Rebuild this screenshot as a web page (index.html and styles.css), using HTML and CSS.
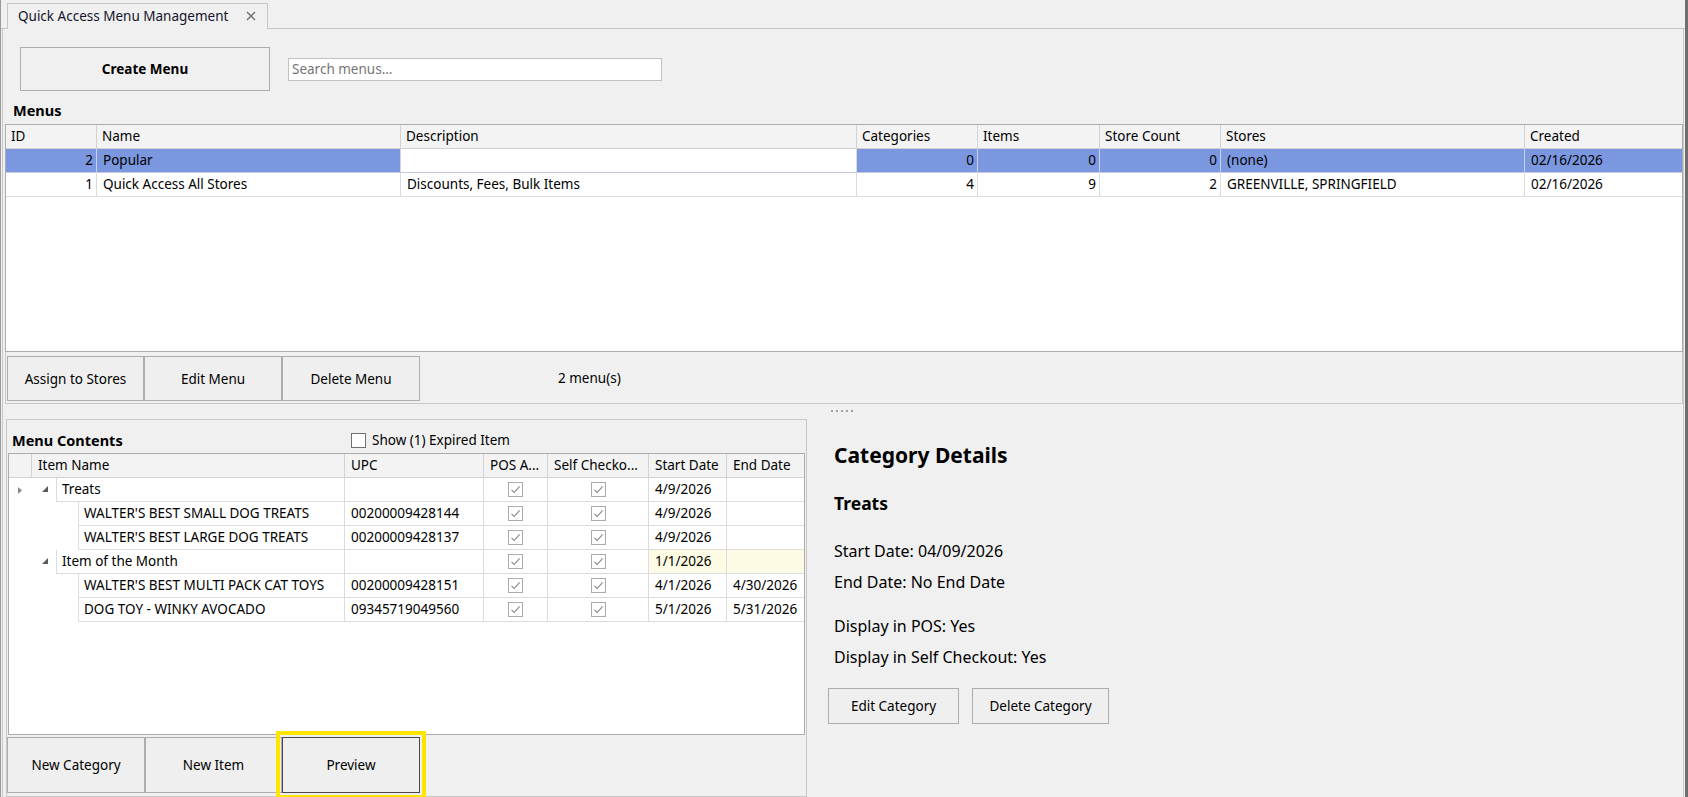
FILE: index.html
```html
<!DOCTYPE html>
<html>
<head>
<meta charset="utf-8">
<title>Quick Access Menu Management</title>
<link rel="stylesheet" href="styles.css">
</head>
<body>
<div class="window">
  <div class="tabstrip">
    <div class="tab">
      <span class="tab-title">Quick Access Menu Management</span>
      <svg class="tab-close" width="10" height="10" viewBox="0 0 10 10"><path d="M1 1L9 9M9 1L1 9" stroke="#6a6a6a" stroke-width="1.3"/></svg>
    </div>
  </div>
  <div class="page">
    <div class="toolbar">
      <button class="btn btn-create">Create Menu</button>
      <input class="search" type="text" placeholder="Search menus...">
    </div>
    <div class="section-title">Menus</div>
    <div class="mgrid">
      <div class="mrow mhead">
        <div class="mc">ID</div>
        <div class="mc">Name</div>
        <div class="mc">Description</div>
        <div class="mc">Categories</div>
        <div class="mc">Items</div>
        <div class="mc">Store Count</div>
        <div class="mc">Stores</div>
        <div class="mc">Created</div>
      </div>
      <div class="mrow msel">
        <div class="mc num">2</div>
        <div class="mc">Popular</div>
        <div class="mc focus"></div>
        <div class="mc num">0</div>
        <div class="mc num">0</div>
        <div class="mc num">0</div>
        <div class="mc">(none)</div>
        <div class="mc">02/16/2026</div>
      </div>
      <div class="mrow">
        <div class="mc num">1</div>
        <div class="mc">Quick Access All Stores</div>
        <div class="mc">Discounts, Fees, Bulk Items</div>
        <div class="mc num">4</div>
        <div class="mc num">9</div>
        <div class="mc num">2</div>
        <div class="mc">GREENVILLE, SPRINGFIELD</div>
        <div class="mc">02/16/2026</div>
      </div>
    </div>
    <div class="btnbar">
      <button class="btn bar-btn w137">Assign to Stores</button>
      <button class="btn bar-btn w138">Edit Menu</button>
      <button class="btn bar-btn w138">Delete Menu</button>
      <span class="count">2 menu(s)</span>
    </div>
    <div class="splitter"><span></span><span></span><span></span><span></span><span></span></div>
    <div class="lower">
      <div class="contents">
        <div class="contents-head">
          <div class="contents-title">Menu Contents</div>
          <label class="show-expired"><span class="cb"></span>Show (1) Expired Item</label>
        </div>
        <div class="cgrid">
          <div class="crow chead">
            <div class="cc"></div>
            <div class="cc">Item Name</div>
            <div class="cc">UPC</div>
            <div class="cc">POS A...</div>
            <div class="cc">Self Checko...</div>
            <div class="cc">Start Date</div>
            <div class="cc">End Date</div>
          </div>

          <div class="crow">
            <div class="ind"><svg width="5" height="7" viewBox="0 0 5 7"><path d="M0 0L4 3.5L0 7Z" fill="#8a8a8a"/></svg></div>
            <div class="cc name">
              <span class="indent l0"><svg class="exp" width="6" height="6" viewBox="0 0 6 6"><path d="M6 0L6 6L0 6Z" fill="#5c5c5c"/></svg></span>
              <span class="nm">Treats</span>
            </div>
            <div class="cc"></div>
            <div class="cc ck"><svg class="chk" width="15" height="15" viewBox="0 0 15 15"><rect x="0.5" y="0.5" width="14" height="14" fill="#fff" stroke="#ababab"/><path d="M3.5 7.8L6.2 10.5L11.6 4.4" fill="none" stroke="#858585" stroke-width="1.1"/></svg></div>
            <div class="cc ck"><svg class="chk" width="15" height="15" viewBox="0 0 15 15"><rect x="0.5" y="0.5" width="14" height="14" fill="#fff" stroke="#ababab"/><path d="M3.5 7.8L6.2 10.5L11.6 4.4" fill="none" stroke="#858585" stroke-width="1.1"/></svg></div>
            <div class="cc">4/9/2026</div>
            <div class="cc"></div>
          </div>

          <div class="crow">
            <div class="ind"></div>
            <div class="cc name"><span class="indent l1"></span><span class="nm">WALTER'S BEST SMALL DOG TREATS</span></div>
            <div class="cc">00200009428144</div>
            <div class="cc ck"><svg class="chk" width="15" height="15" viewBox="0 0 15 15"><rect x="0.5" y="0.5" width="14" height="14" fill="#fff" stroke="#ababab"/><path d="M3.5 7.8L6.2 10.5L11.6 4.4" fill="none" stroke="#858585" stroke-width="1.1"/></svg></div>
            <div class="cc ck"><svg class="chk" width="15" height="15" viewBox="0 0 15 15"><rect x="0.5" y="0.5" width="14" height="14" fill="#fff" stroke="#ababab"/><path d="M3.5 7.8L6.2 10.5L11.6 4.4" fill="none" stroke="#858585" stroke-width="1.1"/></svg></div>
            <div class="cc">4/9/2026</div>
            <div class="cc"></div>
          </div>

          <div class="crow">
            <div class="ind"></div>
            <div class="cc name"><span class="indent l1"></span><span class="nm">WALTER'S BEST LARGE DOG TREATS</span></div>
            <div class="cc">00200009428137</div>
            <div class="cc ck"><svg class="chk" width="15" height="15" viewBox="0 0 15 15"><rect x="0.5" y="0.5" width="14" height="14" fill="#fff" stroke="#ababab"/><path d="M3.5 7.8L6.2 10.5L11.6 4.4" fill="none" stroke="#858585" stroke-width="1.1"/></svg></div>
            <div class="cc ck"><svg class="chk" width="15" height="15" viewBox="0 0 15 15"><rect x="0.5" y="0.5" width="14" height="14" fill="#fff" stroke="#ababab"/><path d="M3.5 7.8L6.2 10.5L11.6 4.4" fill="none" stroke="#858585" stroke-width="1.1"/></svg></div>
            <div class="cc">4/9/2026</div>
            <div class="cc"></div>
          </div>

          <div class="crow">
            <div class="ind"></div>
            <div class="cc name">
              <span class="indent l0"><svg class="exp" width="6" height="6" viewBox="0 0 6 6"><path d="M6 0L6 6L0 6Z" fill="#5c5c5c"/></svg></span>
              <span class="nm">Item of the Month</span>
            </div>
            <div class="cc"></div>
            <div class="cc ck"><svg class="chk" width="15" height="15" viewBox="0 0 15 15"><rect x="0.5" y="0.5" width="14" height="14" fill="#fff" stroke="#ababab"/><path d="M3.5 7.8L6.2 10.5L11.6 4.4" fill="none" stroke="#858585" stroke-width="1.1"/></svg></div>
            <div class="cc ck"><svg class="chk" width="15" height="15" viewBox="0 0 15 15"><rect x="0.5" y="0.5" width="14" height="14" fill="#fff" stroke="#ababab"/><path d="M3.5 7.8L6.2 10.5L11.6 4.4" fill="none" stroke="#858585" stroke-width="1.1"/></svg></div>
            <div class="cc hl">1/1/2026</div>
            <div class="cc hl"></div>
          </div>

          <div class="crow">
            <div class="ind"></div>
            <div class="cc name"><span class="indent l1"></span><span class="nm">WALTER'S BEST MULTI PACK CAT TOYS</span></div>
            <div class="cc">00200009428151</div>
            <div class="cc ck"><svg class="chk" width="15" height="15" viewBox="0 0 15 15"><rect x="0.5" y="0.5" width="14" height="14" fill="#fff" stroke="#ababab"/><path d="M3.5 7.8L6.2 10.5L11.6 4.4" fill="none" stroke="#858585" stroke-width="1.1"/></svg></div>
            <div class="cc ck"><svg class="chk" width="15" height="15" viewBox="0 0 15 15"><rect x="0.5" y="0.5" width="14" height="14" fill="#fff" stroke="#ababab"/><path d="M3.5 7.8L6.2 10.5L11.6 4.4" fill="none" stroke="#858585" stroke-width="1.1"/></svg></div>
            <div class="cc">4/1/2026</div>
            <div class="cc">4/30/2026</div>
          </div>

          <div class="crow">
            <div class="ind"></div>
            <div class="cc name"><span class="indent l1"></span><span class="nm">DOG TOY - WINKY AVOCADO</span></div>
            <div class="cc">09345719049560</div>
            <div class="cc ck"><svg class="chk" width="15" height="15" viewBox="0 0 15 15"><rect x="0.5" y="0.5" width="14" height="14" fill="#fff" stroke="#ababab"/><path d="M3.5 7.8L6.2 10.5L11.6 4.4" fill="none" stroke="#858585" stroke-width="1.1"/></svg></div>
            <div class="cc ck"><svg class="chk" width="15" height="15" viewBox="0 0 15 15"><rect x="0.5" y="0.5" width="14" height="14" fill="#fff" stroke="#ababab"/><path d="M3.5 7.8L6.2 10.5L11.6 4.4" fill="none" stroke="#858585" stroke-width="1.1"/></svg></div>
            <div class="cc">5/1/2026</div>
            <div class="cc">5/31/2026</div>
          </div>
        </div>
        <div class="cbtns">
          <button class="btn low-btn w138">New Category</button>
          <button class="btn low-btn w137">New Item</button>
          <button class="btn low-btn w138 preview">Preview</button>
        </div>
      </div>
      <div class="details">
        <h2 class="d-title">Category Details</h2>
        <h3 class="d-sub">Treats</h3>
        <p class="d-line first">Start Date: 04/09/2026</p>
        <p class="d-line">End Date: No End Date</p>
        <p class="d-line gap">Display in POS: Yes</p>
        <p class="d-line">Display in Self Checkout: Yes</p>
        <div class="d-btns">
          <button class="btn d-btn edit">Edit Category</button>
          <button class="btn d-btn del">Delete Category</button>
        </div>
      </div>
    </div>
  </div>
</div>
</body>
</html>
```

FILE: styles.css
```css
* { box-sizing: border-box; }
html, body { margin: 0; padding: 0; }
body {
  width: 1688px;
  height: 797px;
  overflow: hidden;
  background: #f0f0f0;
  font-family: "Noto Sans", "Open Sans", "Liberation Sans", sans-serif;
  font-size: 13.5px;
  color: #000;
}
.window {
  width: 1688px;
  height: 797px;
  display: flex;
  flex-direction: column;
  border-left: 1px solid #9a9a9a;
  border-right: 3px solid #6e6e6e;
}

/* tab strip */
.tabstrip {
  flex: none;
  height: 29px;
  display: flex;
  align-items: flex-end;
  padding-left: 6px;
  border-bottom: 1px solid #c6c6c6;
}
.tab {
  width: 261px;
  height: 26px;
  margin-bottom: -1px;
  background: #f0f0f0;
  border: 1px solid #c6c6c6;
  border-bottom: none;
  display: flex;
  align-items: center;
  padding: 0 0 2px 10px;
  color: #14142a;
}
.tab-title { white-space: nowrap; }
.tab-close { margin-left: 18px; }

/* page */
.page {
  flex: 1;
  display: flex;
  flex-direction: column;
  margin-left: 1px;
  margin-right: 1px;
  border-left: 1px solid #c8c8c8;
  border-right: 1px solid #c8c8c8;
  min-height: 0;
}
.btn {
  font-family: inherit;
  font-size: 13.5px;
  color: #000;
  background: #efefef;
  border: 1px solid #adadad;
  padding: 0;
  margin: 0;
}
.toolbar {
  flex: none;
  display: flex;
  align-items: center;
  padding: 18px 0 0 17px;
}
.btn-create {
  width: 250px;
  height: 44px;
  font-weight: bold;
  background: #f0f0f0;
}
.search {
  margin-left: 18px;
  width: 374px;
  height: 23px;
  border: 1px solid #c2c2c2;
  background: #fff;
  font-family: inherit;
  font-size: 13.5px;
  padding: 0 0 1px 3px;
  outline: none;
}
.search::placeholder { color: #767676; }

.section-title {
  flex: none;
  margin: 10px 0 5px 10px;
  height: 18px;
  line-height: 18px;
  font-weight: bold;
  font-size: 14.5px;
}

/* menus grid */
.mgrid {
  flex: none;
  margin-left: 2px;
  height: 228px;
  background: #fff;
  border: 1px solid #acacac;
}
.mrow {
  display: grid;
  grid-template-columns: 91px 304px 456px 121px 122px 121px 304px 1fr;
  height: 24px;
}
.mc {
  border-right: 1px solid #dcdcdc;
  border-bottom: 1px solid #dcdcdc;
  padding: 0 4px 0 6px;
  line-height: 23px;
  white-space: nowrap;
  overflow: hidden;
}
.mc:last-child { border-right: none; }
.mc.num { text-align: right; padding-right: 3px; }
.mhead .mc { background: #f3f3f3; padding-left: 5px; border-right-color: #d2d2d2; border-bottom-color: #d2d2d2; }
.msel .mc { background: #7b97df; border-right-color: #c9d4f2; border-bottom-color: #c6cbd8; }
.msel .mc.focus { background: #fff; border-right-color: #dcdcdc; }

.btnbar {
  flex: none;
  margin-left: 2px;
  height: 52px;
  border: 1px solid #c8c8c8;
  border-top: none;
  display: flex;
  align-items: flex-start;
  padding: 4px 0 0 1px;
}
.bar-btn { height: 45px; }
.w137 { width: 137px; }
.w138 { width: 138px; }
.count {
  margin-left: 138px;
  line-height: 45px;
}

.splitter {
  flex: none;
  height: 15px;
  display: flex;
  gap: 3px;
  padding: 6px 0 0 828px;
}
.splitter span {
  width: 2px;
  height: 2px;
  background: #a0a0a0;
}

/* lower area */
.lower {
  flex: 1;
  display: flex;
  min-height: 0;
}
.contents {
  flex: none;
  width: 801px;
  margin-left: 3px;
  border: 1px solid #c8c8c8;
  display: flex;
  flex-direction: column;
}
.contents-head {
  flex: none;
  height: 33px;
  display: flex;
  align-items: center;
  padding: 7px 0 0 5px;
}
.contents-title {
  width: 339px;
  font-weight: bold;
  font-size: 14.5px;
}
.show-expired {
  display: flex;
  align-items: center;
}
.cb {
  width: 15px;
  height: 15px;
  border: 1px solid #707070;
  background: #fff;
  margin-right: 6px;
}

.cgrid {
  flex: none;
  margin-left: 1px;
  width: 797px;
  height: 282px;
  background: #fff;
  border: 1px solid #acacac;
}
.crow {
  display: grid;
  grid-template-columns: 23px 313px 139px 64px 101px 78px 1fr;
  height: 24px;
}
.chead { height: 24px; }
.cc {
  border-right: 1px solid #dcdcdc;
  border-bottom: 1px solid #dcdcdc;
  padding: 0 0 0 6px;
  line-height: 23px;
  white-space: nowrap;
  overflow: hidden;
}
.cc:last-child { border-right: none; }
.chead .cc { background: #f3f3f3; border-color: #d2d2d2; }
.ind {
  display: flex;
  align-items: center;
  padding-left: 9px;
}
.cc.name {
  display: flex;
  padding: 0;
  border-bottom: none;
}
.indent {
  flex: none;
  display: flex;
  align-items: center;
}
.indent.l0 { width: 24px; padding: 0 0 3px 10px; }
.indent.l1 { width: 46px; }
.nm {
  flex: 1;
  border-left: 1px solid #dcdcdc;
  border-bottom: 1px solid #dcdcdc;
  padding-left: 5px;
}
.cc.ck {
  display: flex;
  justify-content: center;
  align-items: center;
  padding: 0;
}
.cc.hl { background: #fdfbe3; }

.cbtns {
  flex: none;
  display: flex;
  padding-top: 2px;
}
.low-btn { height: 56px; }
.low-btn.preview {
  border-color: #4a4a4a;
  outline: 4px solid #ffe500;
  outline-offset: 2px;
}

/* details */
.details {
  flex: 1;
  padding: 21px 0 0 27px;
}
.d-title {
  margin: 0;
  font-size: 21px;
  line-height: 30px;
  font-weight: bold;
}
.d-sub {
  margin: 21px 0 0 0;
  font-size: 17.5px;
  line-height: 24px;
  font-weight: bold;
}
.d-line {
  margin: 0;
  font-size: 16px;
  line-height: 31px;
}
.d-line.first { margin-top: 21px; }
.d-line.gap { margin-top: 13px; }
.d-btns {
  display: flex;
  gap: 13px;
  margin: 15px 0 0 -6px;
}
.d-btn { height: 36px; font-size: 13.5px; }
.d-btn.edit { width: 131px; }
.d-btn.del { width: 137px; }
```
